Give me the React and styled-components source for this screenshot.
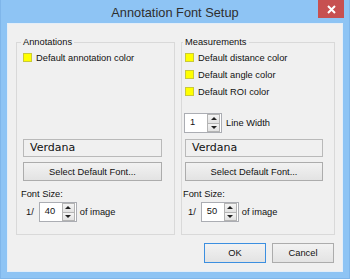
import React from "react";
import styled, { createGlobalStyle } from "styled-components";

const GlobalStyle = createGlobalStyle`
  html, body { margin: 0; padding: 0; background: #8ec4f4; }
  * { box-sizing: border-box; }
`;

const UI_FONT = `"Liberation Sans", Arial, sans-serif`;

const Window = styled.div`
  width: 350px;
  height: 279px;
  background: #8ec4f4;
  border: 1px solid #7fb6ea;
  border-top: 0;
  padding: 0 6px 6px 6px;
  display: flex;
  flex-direction: column;
  font-family: ${UI_FONT};
  font-size: 9.3px;
  color: #111;
`;

const TitleBar = styled.div`
  height: 23px;
  display: grid;
  grid-template-columns: 1fr auto 1fr;
  align-items: start;
`;

const Title = styled.div`
  grid-column: 2;
  font-size: 12.8px;
  line-height: 14px;
  padding-top: 6px;
  color: #2e2e2e;
  white-space: nowrap;
`;

const CloseButton = styled.div`
  grid-column: 3;
  justify-self: end;
  width: 26px;
  height: 18px;
  margin-right: -1px;
  background: #c75050;
  display: flex;
  align-items: center;
  justify-content: center;
`;

const Client = styled.div`
  flex: 1;
  border: 1px solid #e4eef8;
  background: #f0f0f0;
  padding: 12px 7px 8px 8px;
  display: flex;
  flex-direction: column;
`;

const Groups = styled.div`
  display: grid;
  grid-template-columns: 159px 154px;
  column-gap: 6px;
  height: 199px;
`;

const Group = styled.fieldset`
  margin: 0;
  min-width: 0;
  border: 1px solid #d9d9d9;
  padding: 1px ${(p) => p.$padR}px 12px ${(p) => p.$padL}px;
  display: flex;
  flex-direction: column;
`;

const Legend = styled.legend`
  padding: 0 2px;
  margin-left: -2px;
  font-size: 9.3px;
  line-height: 12px;
  color: #111;
`;

const ColorRow = styled.div`
  height: 17px;
  display: flex;
  align-items: center;
  gap: 4px;
`;

const Swatch = styled.span`
  width: 9px;
  height: 9px;
  background: #ffff00;
  border: 1px solid #c9c93a;
  flex: none;
`;

const LineWidthRow = styled.div`
  margin-top: 13px;
  margin-left: -1px;
  display: flex;
  align-items: center;
  gap: 4px;
`;

const Bottom = styled.div`
  margin-top: auto;
  display: flex;
  flex-direction: column;
`;

const FontField = styled.div`
  height: 18px;
  border: 1px solid #b9b9b9;
  background: #f0f0f0;
  padding-left: 6px;
  font-family: "DejaVu Sans", Verdana, sans-serif;
  font-size: 11px;
  line-height: 16px;
  color: #111;
`;

const PushButton = styled.div`
  height: ${(p) => p.$h}px;
  width: ${(p) => (p.$w ? `${p.$w}px` : "auto")};
  margin-top: ${(p) => p.$mt || 0}px;
  border: 1px solid ${(p) => (p.$default ? "#3c8fe0" : "#acacac")};
  background: linear-gradient(#f2f2f2, #e3e3e3);
  display: flex;
  align-items: center;
  justify-content: center;
  font-size: 9.3px;
  color: #111;
  white-space: nowrap;
`;

const SizeLabel = styled.div`
  margin-top: 6px;
  margin-left: -2px;
  line-height: 14px;
`;

const SizeRow = styled.div`
  margin-top: 1px;
  display: flex;
  align-items: center;
`;

const Prefix = styled.span`
  margin-left: 3px;
  margin-right: 5px;
`;

const Suffix = styled.span`
  margin-left: 3px;
`;

const SpinBox = styled.div`
  width: 38px;
  height: 20px;
  border: 1px solid #abadb3;
  background: #fff;
  display: flex;
  flex: none;
`;

const SpinValue = styled.div`
  flex: 1;
  padding: 3px 0 0 5px;
  line-height: 11px;
`;

const SpinButtons = styled.div`
  width: 13px;
  margin: 0 1px 0 0;
  display: flex;
  flex-direction: column;
`;

const SpinArrow = styled.div`
  flex: 1;
  border: 1px solid #b4b4b4;
  background: linear-gradient(#f4f4f4, #e2e2e2);
  display: flex;
  align-items: center;
  justify-content: center;
  & + & { margin-top: -1px; }
`;

const Triangle = styled.span`
  width: 0;
  height: 0;
  border-left: 3px solid transparent;
  border-right: 3px solid transparent;
  ${(p) =>
    p.$up
      ? "border-bottom: 3px solid #222;"
      : "border-top: 3px solid #222;"}
`;

const ButtonRow = styled.div`
  margin-top: 8px;
  padding-right: 1px;
  display: flex;
  justify-content: flex-end;
  gap: 6px;
`;

function Spinner({ value }) {
  return (
    <SpinBox>
      <SpinValue>{value}</SpinValue>
      <SpinButtons>
        <SpinArrow>
          <Triangle $up />
        </SpinArrow>
        <SpinArrow>
          <Triangle />
        </SpinArrow>
      </SpinButtons>
    </SpinBox>
  );
}

function FontSection({ size }) {
  return (
    <Bottom>
      <FontField>Verdana</FontField>
      <PushButton $h={19} $mt={5}>Select Default Font...</PushButton>
      <SizeLabel>Font Size:</SizeLabel>
      <SizeRow>
        <Prefix>1/</Prefix>
        <Spinner value={size} />
        <Suffix>of image</Suffix>
      </SizeRow>
    </Bottom>
  );
}

export default function App() {
  return (
    <>
      <GlobalStyle />
      <Window>
        <TitleBar>
          <Title>Annotation Font Setup</Title>
          <CloseButton>
            <svg width="9" height="9" viewBox="0 0 9 9">
              <path d="M1 1 L8 8 M8 1 L1 8" stroke="#fff" strokeWidth="2" />
            </svg>
          </CloseButton>
        </TitleBar>
        <Client>
          <Groups>
            <Group $padL={6} $padR={12}>
              <Legend>Annotations</Legend>
              <ColorRow>
                <Swatch />
                Default annotation color
              </ColorRow>
              <FontSection size="40" />
            </Group>
            <Group $padL={3} $padR={11}>
              <Legend>Measurements</Legend>
              <ColorRow>
                <Swatch />
                Default distance color
              </ColorRow>
              <ColorRow>
                <Swatch />
                Default angle color
              </ColorRow>
              <ColorRow>
                <Swatch />
                Default ROI color
              </ColorRow>
              <LineWidthRow>
                <Spinner value="1" />
                Line Width
              </LineWidthRow>
              <FontSection size="50" />
            </Group>
          </Groups>
          <ButtonRow>
            <PushButton $h={20} $w={62} $default>OK</PushButton>
            <PushButton $h={20} $w={62}>Cancel</PushButton>
          </ButtonRow>
        </Client>
      </Window>
    </>
  );
}
